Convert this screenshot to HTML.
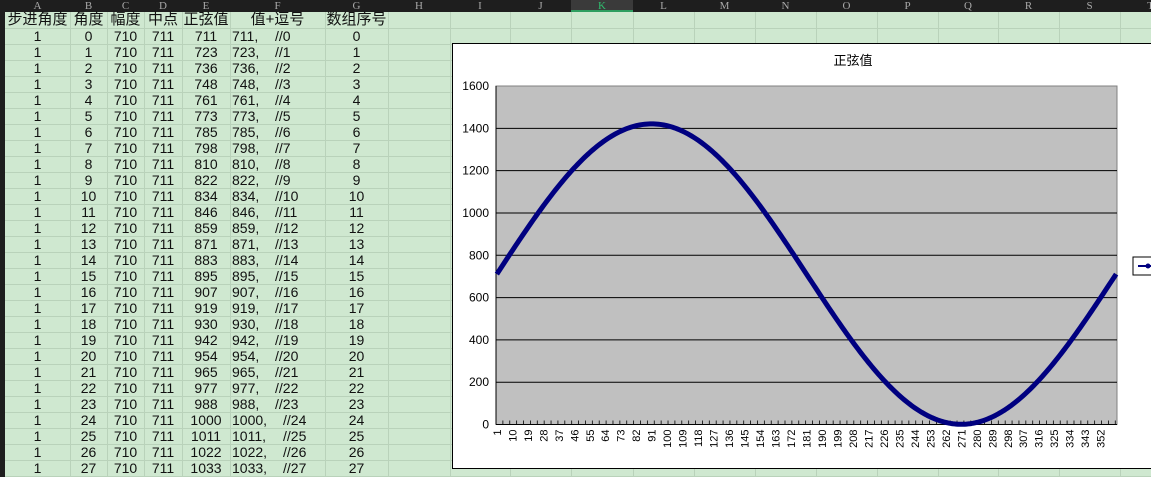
<!DOCTYPE html>
<html><head><meta charset="utf-8">
<style>
*{margin:0;padding:0;box-sizing:border-box}
html,body{width:1151px;height:477px;overflow:hidden}
body{background:#cfe8d0;position:relative;font-family:"Liberation Sans","Noto Sans CJK SC",sans-serif;}
#hdr{position:absolute;left:0;top:0;width:1151px;height:12px;background:#1e1e1e}
.hl{position:absolute;top:0;height:12px;color:#a8a8a8;font:11px "Liberation Serif",serif;line-height:12px;text-align:center}
#rn{position:absolute;left:0;top:12px;width:5px;height:465px;background:#1e1e1e}
.vl{position:absolute;top:12px;width:1px;height:465px;background:#b9d2ba}
.hz{position:absolute;left:5px;width:1146px;height:1px;background:#b9d2ba}
.c{position:absolute;height:16px;line-height:16px;font-size:14px;color:#111;white-space:pre;text-align:center}
#chart{position:absolute;left:452px;top:43px;width:710px;height:426px;background:#fff;border:1px solid #000}
</style></head><body>
<div id="hdr"></div><div id="rn"></div>
<div id="grid"></div>
<div id="cells"></div>
<div id="chart"><svg id="sv" width="710" height="426" style="position:absolute;left:-1px;top:-1px"></svg></div>
<script>
var cols=[5,70,107,144,182,230,325,388,450,510,571,633,694,755,816,877,938,998,1059,1120,1181];
var names="ABCDEFGHIJKLMNOPQRST";
var g='';
for(var i=0;i<cols.length-1;i++){
 var l=cols[i],w=cols[i+1]-cols[i];
 var st=(names[i]=='K')?'background:#3a3a3a;color:#2fbf6f;border-bottom:2px solid #2e9e60;':'';
 g+='<div class="hl" style="left:'+l+'px;width:'+w+'px;'+st+'">'+names[i]+'</div>';
 if(i>0)g+='<div class="vl" style="left:'+l+'px"></div>';
}
for(var r=0;r<30;r++){g+='<div class="hz" style="top:'+(28+r*16)+'px"></div>';}
document.getElementById('grid').innerHTML=g;
var c='';
function cell(x,w,y,t,fs){c+='<div class="c" style="left:'+x+'px;width:'+w+'px;top:'+y+'px;'+(fs?'font-size:'+fs+'px':'')+'">'+t+'</div>';}
var hd=['步进角度','角度','幅度','中点','正弦值','值+逗号','数组序号'];
for(var i=0;i<7;i++)cell(cols[i],cols[i+1]-cols[i],12,hd[i],15);
for(var r=0;r<28;r++){
 var y=28+r*16,v=Math.round(711+710*Math.sin(r*Math.PI/180));
 cell(cols[0],65,y,'1');cell(cols[1],37,y,''+r);cell(cols[2],37,y,'710');cell(cols[3],38,y,'711');
 cell(cols[4],48,y,''+v);
 c+='<div class="c" style="left:232px;width:90px;top:'+y+'px;text-align:left">'+v+',</div>';
 c+='<div class="c" style="left:'+(v>=1000?283:275)+'px;width:50px;top:'+y+'px;text-align:left">//'+r+'</div>';
 cell(cols[6],63,y,''+r);
}
document.getElementById('cells').innerHTML=c;
var L=496-452,T=86-43,W=1117-496,H=424.5-86;
var s='<text x="'+(853-452)+'" y="'+(65-43)+'" font-size="13" text-anchor="middle" font-family="Liberation Sans,Noto Sans CJK SC,sans-serif">正弦值</text>';
s+='<rect x="'+L+'" y="'+T+'" width="'+W+'" height="'+H+'" fill="#c0c0c0" stroke="#808080"/>';
for(var k=0;k<=8;k++){var yy=T+H-k*H/8;
 if(k>0&&k<8)s+='<line x1="'+L+'" x2="'+(L+W)+'" y1="'+yy+'" y2="'+yy+'" stroke="#000" stroke-width="1"/>';
 s+='<text x="'+(L-7)+'" y="'+(yy+4)+'" font-size="12" text-anchor="end" font-family="Liberation Sans,sans-serif">'+(k*200)+'</text>';}
s+='<line x1="'+L+'" x2="'+(L+W)+'" y1="'+(T+H)+'" y2="'+(T+H)+'" stroke="#000"/>';
s+='<line x1="'+L+'" x2="'+L+'" y1="'+T+'" y2="'+(T+H)+'" stroke="#000"/>';
var dx=W/361,p='';
for(var i=0;i<=361;i++){if(i%4==0)s+='<line x1="'+(L+i*dx)+'" x2="'+(L+i*dx)+'" y1="'+(T+H)+'" y2="'+(T+H-4)+'" stroke="#000" stroke-width="0.8"/>';}
for(var i=1;i<=361;i++){var v=711+710*Math.sin((i-1)*Math.PI/180);
 p+=(i==1?'M':'L')+(L+(i-0.5)*dx).toFixed(2)+' '+(T+H-v*H/1600).toFixed(2);}
s+='<path d="'+p+'" fill="none" stroke="#000080" stroke-width="5" stroke-linejoin="round"/>';
for(var i=1;i<=352;i+=9){var x=L+(i-0.5)*dx;
 s+='<text transform="translate('+(x+4)+','+(T+H+5)+') rotate(-90)" font-size="11" text-anchor="end" font-family="Liberation Sans,sans-serif">'+i+'</text>';}
s+='<rect x="'+(1133-452)+'" y="'+(257-43)+'" width="30" height="18" fill="#fff" stroke="#000"/>';
s+='<line x1="'+(1138-452)+'" x2="'+(1158-452)+'" y1="'+(266-43)+'" y2="'+(266-43)+'" stroke="#000080" stroke-width="2"/><circle cx="'+(1148-452)+'" cy="'+(266-43)+'" r="2.5" fill="#000080"/>';
document.getElementById('sv').innerHTML=s;
</script>
</body></html>
